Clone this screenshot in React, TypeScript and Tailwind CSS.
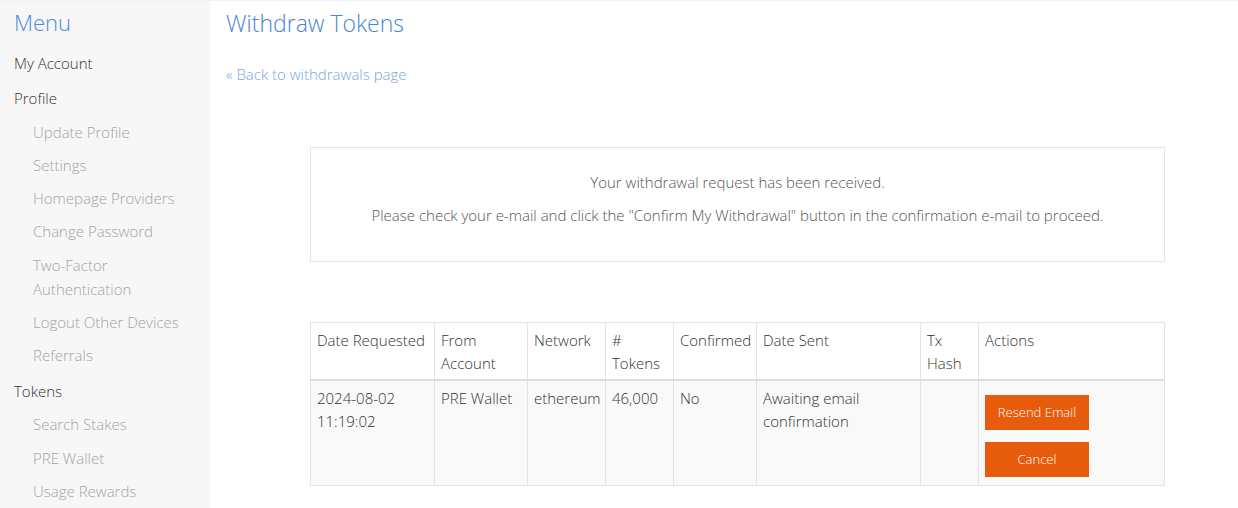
const menu: { label: string; sub?: boolean }[] = [
  { label: "My Account" },
  { label: "Profile" },
  { label: "Update Profile", sub: true },
  { label: "Settings", sub: true },
  { label: "Homepage Providers", sub: true },
  { label: "Change Password", sub: true },
  { label: "Two-Factor Authentication", sub: true },
  { label: "Logout Other Devices", sub: true },
  { label: "Referrals", sub: true },
  { label: "Tokens" },
  { label: "Search Stakes", sub: true },
  { label: "PRE Wallet", sub: true },
  { label: "Usage Rewards", sub: true },
];

const cols = [
  { h: ["Date Requested"], w: "w-[124px]" },
  { h: ["From", "Account"], w: "w-[93px]" },
  { h: ["Network"], w: "w-[78px]" },
  { h: ["#", "Tokens"], w: "w-[68px]" },
  { h: ["Confirmed"], w: "w-[83px]" },
  { h: ["Date Sent"], w: "w-[164px]" },
  { h: ["Tx", "Hash"], w: "w-[58px]" },
  { h: ["Actions"], w: "" },
];

const td = "align-top px-[6px] py-[6px] border border-[#e3e3e3]";

const Sidebar = () => (
  <aside className="w-[210px] shrink-0 bg-[#f7f7f7] px-[14px] pt-[6px] min-h-[508px]">
    <h2 className="text-[22px] leading-[30px] text-[#4a8ad6] font-light mb-[11px]">Menu</h2>
    <ul className="flex flex-col gap-[9.3px] text-[15px] leading-[24px] font-light">
      {menu.map((m) => (
        <li
          key={m.label}
          className={m.sub ? "pl-[19px] text-[#a3a3a3] pr-4" : "text-[#333] mt-[2.5px]"}
        >
          {m.label}
        </li>
      ))}
    </ul>
  </aside>
);

export default function App() {
  return (
    <div
      className="flex w-[1238px] h-[508px] overflow-hidden bg-white border-t border-[#eef4f8]"
      style={{ fontFamily: "'Open Sans', Lato, sans-serif" }}
    >
      <Sidebar />
      <main className="flex-1 pl-[16px] pt-[7px]">
        <h1 className="text-[23px] leading-[30px] text-[#4a86d2] font-light">Withdraw Tokens</h1>
        <a className="block mt-[26px] text-[15px] leading-[20px] text-[#7aa6dd] font-light">« Back to withdrawals page</a>

        <div className="ml-[84px] w-[855px] mt-[63px] border border-[#e6e6e6] h-[115px] flex flex-col items-center pt-[24px] gap-[13px] text-[15px] leading-[20px] text-[#555] font-light">
          <p>Your withdrawal request has been received.</p>
          <p>Please check your e-mail and click the "Confirm My Withdrawal" button in the confirmation e-mail to proceed.</p>
        </div>

        <table className="ml-[84px] mt-[60px] w-[855px] table-fixed border-collapse text-[15px] leading-[23px] text-[#333] font-light">
          <thead>
            <tr>
              {cols.map((c) => (
                <th
                  key={c.h.join(" ")}
                  className={`${c.w} text-left font-light align-top px-[6px] pt-[6px] pb-[4px] border border-[#e3e3e3] border-b-2 border-b-[#dcdcdc]`}
                >
                  {c.h.map((l, i) => (
                    <span key={l}>
                      {i > 0 && <br />}
                      {l}
                    </span>
                  ))}
                </th>
              ))}
            </tr>
          </thead>
          <tbody className="bg-[#f9f9f9]">
            <tr>
              <td className={td}>
                2024-08-02
                <br />
                11:19:02
              </td>
              <td className={td}>PRE Wallet</td>
              <td className={td}>ethereum</td>
              <td className={td}>46,000</td>
              <td className={td}>No</td>
              <td className={td}>
                Awaiting email
                <br />
                confirmation
              </td>
              <td className={td}></td>
              <td className="align-top px-[6px] pt-[6px] pb-[8px] border border-[#e3e3e3]">
                <div className="flex flex-col gap-[12px] pt-[8px]">
                  <button className="w-[104px] h-[35px] bg-[#e65c0c] text-white text-[13px] font-light">Resend Email</button>
                  <button className="w-[104px] h-[35px] bg-[#e65c0c] text-white text-[13px] font-light">Cancel</button>
                </div>
              </td>
            </tr>
          </tbody>
        </table>
      </main>
    </div>
  );
}
